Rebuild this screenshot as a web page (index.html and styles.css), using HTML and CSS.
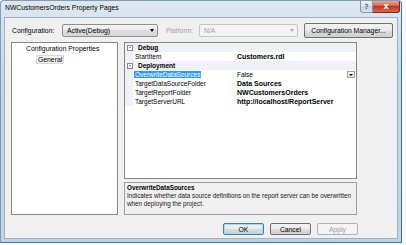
FILE: index.html
```html
<!DOCTYPE html>
<html lang="en">
<head>
    <meta charset="UTF-8">
    <title>NWCustomersOrders Property Pages</title>
    <link rel="stylesheet" href="styles.css">
</head>
<body>
<div class="window">
    <div class="titlebar">
        <span class="title">NWCustomersOrders Property Pages</span>
        <div class="caption-buttons">
            <span class="cap-help">?</span>
            <span class="cap-close">x</span>
        </div>
    </div>

    <div class="client">
        <!-- configuration / platform row -->
        <div class="config-row">
            <label class="lbl lbl-config">Configuration:</label>
            <div class="combo combo-config">
                <span>Active(Debug)</span>
                <span class="arrow"></span>
            </div>
            <label class="lbl lbl-platform">Platform:</label>
            <div class="combo combo-platform">
                <span>N/A</span>
                <span class="arrow"></span>
            </div>
            <button class="btn btn-manager">Configuration Manager...</button>
        </div>

        <div class="main">
            <div class="tree">
                <div class="tree-root">Configuration Properties</div>
                <div class="tree-item"><span class="tree-sel">General</span></div>
            </div>

            <div class="right">
                <div class="grid">
                    <div class="cat"><span class="toggle"></span><span class="cat-name">Debug</span></div>
                    <div class="prop">
                        <span class="name">StartItem</span>
                        <span class="value bold">Customers.rdl</span>
                    </div>
                    <div class="cat"><span class="toggle"></span><span class="cat-name">Deployment</span></div>
                    <div class="prop">
                        <span class="name"><span class="sel">OverwriteDataSources</span></span>
                        <span class="value">False</span>
                        <span class="drop"></span>
                    </div>
                    <div class="prop">
                        <span class="name">TargetDataSourceFolder</span>
                        <span class="value bold">Data Sources</span>
                    </div>
                    <div class="prop">
                        <span class="name">TargetReportFolder</span>
                        <span class="value bold">NWCustomersOrders</span>
                    </div>
                    <div class="prop">
                        <span class="name">TargetServerURL</span>
                        <span class="value bold">http://localhost/ReportServer</span>
                    </div>
                </div>
                <div class="desc">
                    <div class="desc-title">OverwriteDataSources</div>
                    <div class="desc-text">Indicates whether data source definitions on the report server can be overwritten when deploying the project.</div>
                </div>
            </div>
        </div>

        <div class="buttons">
            <button class="btn btn-ok">OK</button>
            <button class="btn">Cancel</button>
            <button class="btn btn-disabled">Apply</button>
        </div>
    </div>
</div>
</body>
</html>
```

FILE: styles.css
```css
* {
    box-sizing: border-box;
}

body {
    margin: 0;
    background-color: #fff;
    font-family: "Liberation Sans", Arial, sans-serif;
    font-size: 6.8px;
    color: #000;
}

/* window frame */
.window {
    width: 402px;
    height: 243px;
    display: flex;
    flex-direction: column;
    padding: 0 3px 3px 3px;
    background: linear-gradient(#dfe8f1, #c6d5e5 30%, #c2d2e3);
    border: 1px solid #7f9bb8;
    border-right-color: #2e7aa6;
    border-bottom-color: #2e7aa6;
    border-radius: 4px 4px 0 0;
}

.titlebar {
    height: 16px;
    display: flex;
    align-items: flex-start;
    justify-content: space-between;
}

.title {
    margin: 3px 0 0 1px;
    font-size: 6.8px;
    color: #000;
}

.caption-buttons {
    display: flex;
    margin-right: -2px;
}

.cap-help,
.cap-close {
    height: 12px;
    display: flex;
    align-items: center;
    justify-content: center;
    font-family: "DejaVu Sans", sans-serif;
    font-weight: bold;
}

.cap-help {
    width: 13px;
    font-size: 7px;
    color: #5a6f86;
    background: linear-gradient(#eef3f8, #d6e1ec 50%, #c3d3e3 50%, #d8e4ef);
    border: 1px solid #8396ab;
    border-top: none;
    border-radius: 0 0 0 3px;
}

.cap-close {
    width: 27px;
    font-size: 8px;
    color: #fff;
    background: linear-gradient(#eaa898, #d5583f 50%, #c2351f 50%, #d96b4c);
    border: 1px solid #702a1f;
    border-top: none;
    border-left: none;
    border-radius: 0 0 3px 0;
}

.client {
    flex: 1;
    background-color: #f0f0f0;
    border: 1px solid #9fb1c4;
    display: flex;
    flex-direction: column;
}

/* configuration row */
.config-row {
    display: flex;
    align-items: center;
    height: 15px;
    margin-top: 5px;
    padding-left: 7px;
}

.lbl {
    white-space: nowrap;
}

.lbl-config {
    width: 50px;
}

.lbl-platform {
    width: 33px;
    margin-left: 8px;
    color: #a0a0a0;
}

.combo {
    height: 13px;
    display: flex;
    align-items: center;
    justify-content: space-between;
    padding: 0 3px 0 4px;
    border: 1px solid #8e8f8f;
    border-radius: 2px;
    background: linear-gradient(#f4f4f4, #ececec 50%, #dedede 50%, #d6d6d6);
}

.combo-config {
    width: 96px;
}

.combo-platform {
    width: 99px;
    color: #a0a0a0;
    border-color: #c6c6c6;
    background: #f4f4f4;
}

.arrow {
    width: 0;
    height: 0;
    border-left: 2.5px solid transparent;
    border-right: 2.5px solid transparent;
    border-top: 3px solid #000;
}

.combo-platform .arrow {
    border-top-color: #a8a8a8;
}

.btn {
    font-family: "Liberation Sans", Arial, sans-serif;
    font-size: 6.8px;
    color: #000;
    padding: 0;
    border: 1px solid #707070;
    border-radius: 2px;
    background: linear-gradient(#f2f2f2, #ebebeb 50%, #dddddd 50%, #cfcfcf);
}

.btn-manager {
    width: 89px;
    height: 15px;
    margin-left: 6px;
}

/* tree + grid */
.main {
    display: flex;
    height: 173px;
    margin-top: 4px;
    padding-left: 6px;
    gap: 6px;
}

.tree {
    width: 107px;
    background-color: #fff;
    border: 1px solid #828790;
    padding-top: 1px;
}

.tree-root {
    height: 9px;
    line-height: 9px;
    padding-left: 14px;
}

.tree-item {
    margin-top: 2px;
    padding-left: 24px;
}

.tree-sel {
    display: inline-block;
    height: 9px;
    line-height: 8px;
    padding: 0 1px;
    background-color: #f3f3f3;
    border: 1px solid #d9d9d9;
}

.right {
    width: 233px;
    display: flex;
    flex-direction: column;
    gap: 3px;
}

.grid {
    height: 137px;
    background-color: #fff;
    border: 1px solid #828790;
    font-size: 6.5px;
}

.cat,
.prop {
    height: 9px;
    display: flex;
    align-items: center;
    position: relative;
}

.cat {
    background-color: #eef1f6;
    font-weight: bold;
}

.prop {
    border-left: 8px solid #eef1f6;
}

.toggle {
    width: 6px;
    height: 6px;
    margin: 0 5px 0 2px;
    border: 1px solid #8a8a8a;
    background: linear-gradient(#8a8a8a, #8a8a8a) center / 2px 1px no-repeat #fff;
}

.name {
    width: 102px;
    padding-left: 2px;
    white-space: nowrap;
}

.sel {
    background-color: #3399ff;
    color: #fff;
    padding: 0 1px;
    margin-left: -1px;
}

.value {
    padding-left: 2px;
    white-space: nowrap;
}

.bold {
    font-weight: bold;
    font-size: 7px;
}

.drop {
    position: absolute;
    right: 1px;
    top: 1px;
    width: 8px;
    height: 7px;
    display: flex;
    align-items: center;
    justify-content: center;
    border: 1px solid #a0a0a0;
    background: linear-gradient(#fafafa, #e2e2e2);
}

.drop::after {
    content: "";
    border-left: 2px solid transparent;
    border-right: 2px solid transparent;
    border-top: 2px solid #000;
}

.desc {
    height: 33px;
    border: 1px solid #a0a0a0;
    padding: 1px 2px;
    font-size: 6.3px;
    line-height: 8px;
}

.desc-title {
    font-weight: bold;
}

.desc-text {
    color: #202020;
}

/* dialog buttons */
.buttons {
    display: flex;
    gap: 6px;
    height: 12px;
    margin-top: 8px;
    padding-left: 218px;
}

.buttons .btn {
    width: 41px;
    height: 12px;
}

.btn-ok {
    border-color: #3c7fb1;
    box-shadow: inset 0 0 0 1px #a8d8f4;
}

.btn-disabled {
    color: #a0a0a0;
    border-color: #adb2b5;
    background: #f4f4f4;
}
```
